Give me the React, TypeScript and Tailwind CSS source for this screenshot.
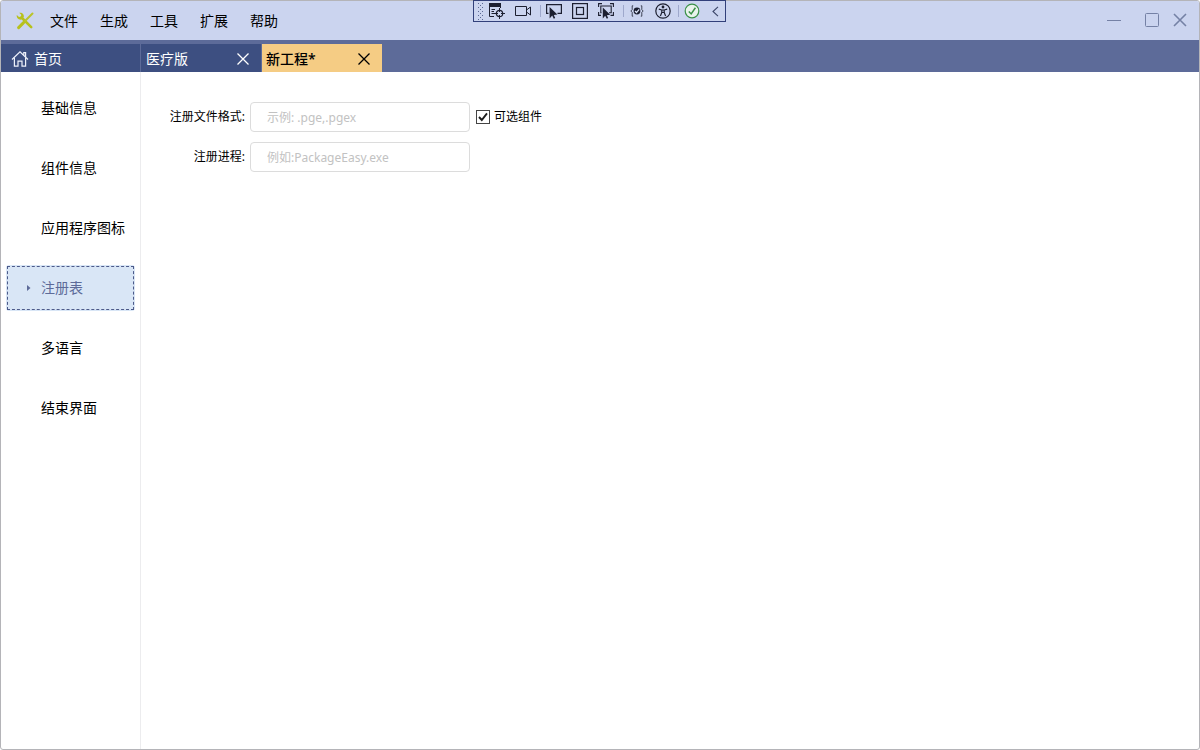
import { useState } from "react";
import type { ReactNode } from "react";

const menus = ["文件", "生成", "工具", "扩展", "帮助"];
const sections = ["基础信息", "组件信息", "应用程序图标", "注册表", "多语言", "结束界面"];

function LogoIcon() {
  return (
    <svg width="18" height="18" viewBox="0 0 18 18" fill="none">
      <path d="M5.5 5.5 L15.2 15.2" stroke="#b7c11c" strokeWidth="2.6" strokeLinecap="round" />
      <path d="M0.8 3 L3 5 L5 4.6 L5.2 2.8 L3.2 0.8 C6 0 8.4 2.4 7.8 5 L5.4 7.6 C2.6 8.2 0.2 5.8 0.8 3Z" fill="#b7c11c" />
      <path d="M16.5 1.5 L8.5 9.5" stroke="#bac42a" strokeWidth="2" strokeLinecap="round" />
      <path d="M7.6 10.6 L2.6 15.6" stroke="#b7c11c" strokeWidth="3" strokeLinecap="round" />
    </svg>
  );
}

function HomeIcon() {
  return (
    <svg width="18" height="18" viewBox="0 0 18 18" fill="none" stroke="#eef1fb" strokeWidth="1.2">
      <path d="M1 9.5 L9 1.8 L17 9.5" />
      <path d="M12.8 5.2 V2.6 H14.6 V7" />
      <path d="M3.4 7.8 V16.2 H7 V11.2 H11 V16.2 H14.6 V7.8" />
    </svg>
  );
}

function CloseIcon() {
  return (
    <svg width="12" height="12" viewBox="0 0 12 12" fill="none" stroke="currentColor" strokeWidth="1.3">
      <path d="M0.5 0.5 L11.5 11.5 M11.5 0.5 L0.5 11.5" />
    </svg>
  );
}

function ToolButton({ label, children }: { label: string; children: ReactNode }) {
  return (
    <button type="button" aria-label={label} className="flex h-5 w-[26px] shrink-0 items-center justify-center">
      {children}
    </button>
  );
}

function Separator() {
  return <span className="h-3 w-px shrink-0 bg-[#9ea8cc]" />;
}

function DebugToolbar() {
  return (
    <div className="absolute -top-px left-[472px] flex h-[22px] w-[253px] items-center border border-[#32407a] bg-[#cbd4ef] pl-1 text-[#1c1f30]">
      <svg width="6" height="17" viewBox="0 0 6 17" fill="#5c6994" className="shrink-0">
        {[0, 4, 8, 12, 16].map((y) => (
          <g key={y}>
            <rect x="0" y={y} width="1" height="1" />
            <rect x="4" y={y} width="1" height="1" />
            {y < 16 && <rect x="2" y={y + 2} width="1" height="1" />}
          </g>
        ))}
      </svg>
      <ToolButton label="实时可视化树">
        <svg width="16" height="16" viewBox="0 0 16 16" fill="none" stroke="currentColor">
          <path d="M0 0 H12 V4 H0 Z" fill="currentColor" stroke="none" />
          <path d="M0.5 3 V13.5 H5 M11.5 3 V5 M2.5 6.5 H6 M2.5 8.5 H5 M2.5 10.5 H5" />
          <circle cx="10.5" cy="10.5" r="3.2" strokeWidth="1.2" />
          <path d="M10.5 5 V9 M10.5 12 V16 M5 10.5 H9 M12 10.5 H16" />
        </svg>
      </ToolButton>
      <ToolButton label="录制">
        <svg width="17" height="12" viewBox="0 0 17 12" fill="none" stroke="currentColor">
          <path d="M0.5 1.5 H11.5 V10.5 H0.5 Z M11.5 5 L15.5 2 V10 L11.5 7" />
        </svg>
      </ToolButton>
      <span className="w-1 shrink-0" />
      <Separator />
      <ToolButton label="选择元素">
        <svg width="16" height="16" viewBox="0 0 16 16" fill="none" stroke="currentColor" strokeWidth="1.2">
          <path d="M2.5 10.4 H0.6 V1.6 H15.4 V10.4 H11.5" />
          <path d="M3.6 4 V15.4 L6.2 12.6 L7.8 15.8 L9.2 15 L7.8 12 L11.4 11.6 Z" fill="currentColor" stroke="none" />
        </svg>
      </ToolButton>
      <ToolButton label="显示布局装饰器">
        <svg width="16" height="16" viewBox="0 0 16 16" fill="none" stroke="currentColor" strokeWidth="1.2">
          <rect x="0.6" y="0.6" width="14.8" height="14.8" />
          <rect x="4.5" y="4.5" width="7" height="7" />
        </svg>
      </ToolButton>
      <ToolButton label="跟踪焦点元素">
        <svg width="16" height="16" viewBox="0 0 16 16" fill="none" stroke="currentColor" strokeWidth="1.1">
          <path d="M0.6 4 V0.6 H4 M12 0.6 H15.4 V4 M15.4 9 V12.4 H12.5 M3 12.4 H0.6 V9" />
          <path d="M3.6 9.8 H2.8 V3 H13.2 V9.8 H11" />
          <path d="M4.8 4.6 V15.4 L7.2 12.8 L8.8 15.8 L10.2 15 L8.8 12.2 L12.2 11.8 Z" fill="currentColor" stroke="none" />
        </svg>
      </ToolButton>
      <span className="w-1 shrink-0" />
      <Separator />
      <ToolButton label="绑定失败">
        <svg width="14" height="12" viewBox="0 0 14 12" fill="none" stroke="currentColor">
          <path d="M3.2 0.8 H2.2 V4.6 L0.8 6 L2.2 7.4 V11.2 H3.2 M10.8 0.8 H11.8 V4.6 L13.2 6 L11.8 7.4 V11.2 H10.8" strokeWidth="0.8" />
          <circle cx="7" cy="6" r="3.4" fill="currentColor" stroke="none" />
          <path d="M5 6 L6.5 7.5 L9.2 4.4" stroke="#dce3f7" strokeWidth="1.2" />
        </svg>
      </ToolButton>
      <ToolButton label="辅助功能">
        <svg width="16" height="16" viewBox="0 0 16 16" fill="none" stroke="currentColor" strokeWidth="1.2">
          <circle cx="8" cy="8" r="7.2" />
          <circle cx="8" cy="4" r="1.4" fill="currentColor" stroke="none" />
          <path d="M3.8 6.2 L6.8 7 H9.2 L12.2 6.2 M6.8 7 V9.5 L5.4 13 M9.2 7 V9.5 L10.6 13 M6.8 9.5 H9.2" />
        </svg>
      </ToolButton>
      <span className="w-0.5 shrink-0" />
      <Separator />
      <ToolButton label="热重载">
        <svg width="16" height="16" viewBox="0 0 16 16" fill="none" stroke="#3a9147">
          <circle cx="8" cy="8" r="6.8" fill="#e9f3ec" strokeWidth="1.2" />
          <path d="M4.8 8.4 L7.2 10.9 L11.4 4.8" strokeWidth="1.5" />
        </svg>
      </ToolButton>
      <button type="button" aria-label="折叠" className="flex h-5 flex-1 items-center justify-center">
        <svg width="7" height="11" viewBox="0 0 7 11" fill="none" stroke="#3c4669" strokeWidth="1.1">
          <path d="M6 0.8 L1 5.5 L6 10.2" />
        </svg>
      </button>
    </div>
  );
}

function TitleBar() {
  return (
    <header className="flex h-[39px] shrink-0 items-center justify-between rounded-t-[2px] bg-[#cbd4ef]">
      <div className="flex items-center pl-[15px]">
        <LogoIcon />
        <nav className="flex pl-[5px]">
          {menus.map((m) => (
            <button key={m} type="button" className="w-[50px] text-center text-sm text-black">
              {m}
            </button>
          ))}
        </nav>
      </div>
      <div className="flex items-center pr-3 pb-px text-[#7581a5]">
        <button type="button" aria-label="最小化" className="flex h-4 w-[38px] items-center">
          <svg width="14" height="14" viewBox="0 0 14 14" stroke="currentColor">
            <path d="M0 7.5 H14" />
          </svg>
        </button>
        <button type="button" aria-label="最大化" className="flex h-4 w-7 items-center">
          <svg width="14" height="14" viewBox="0 0 14 14" fill="none" stroke="currentColor">
            <rect x="0.5" y="0.5" width="13" height="13" rx="1" />
          </svg>
        </button>
        <button type="button" aria-label="关闭" className="flex h-4 items-center">
          <svg width="14" height="14" viewBox="0 0 14 14" stroke="currentColor" strokeWidth="1.6">
            <path d="M1 1 L13 13 M13 1 L1 13" />
          </svg>
        </button>
      </div>
    </header>
  );
}

function TabStrip() {
  return (
    <div className="flex h-8 shrink-0 items-end bg-[#5d6b99]">
      <button type="button" className="flex h-7 w-[139px] items-center gap-[5px] bg-[#3d4f81] pt-0.5 pl-[10px] text-sm text-white">
        <HomeIcon />
        首页
      </button>
      <div className="flex h-7 w-[121px] items-center justify-between border-l border-[#5d6b99] bg-[#3d4f81] pt-0.5 pr-3 pl-[5px] text-white">
        <button type="button" className="text-sm">医疗版</button>
        <button type="button" aria-label="关闭 医疗版"><CloseIcon /></button>
      </div>
      <div className="flex h-7 w-[121px] items-center justify-between border-l border-[#5d6b99] bg-[#f5cc84] pt-0.5 pr-3 pl-1 text-black">
        <button type="button" className="text-sm font-medium">新工程*</button>
        <button type="button" aria-label="关闭 新工程"><CloseIcon /></button>
      </div>
    </div>
  );
}

function Sidebar({ current, onSelect }: { current: string; onSelect: (s: string) => void }) {
  return (
    <nav className="flex w-[140px] shrink-0 flex-col gap-[14px] border-r border-[#ececee] px-[5px] pt-[13px]">
      {sections.map((s) =>
        s === current ? (
          <button key={s} type="button" aria-current="page" className="h-[46px] rounded-[3px] bg-[#d9e6f6] p-px text-sm text-[#5d6b99]">
            <span className="flex h-full items-center border border-dashed border-[#4c5a8a] pl-[18px]">
              <svg width="5" height="6" viewBox="0 0 5 6" fill="#5d6b99" className="mr-[10px]">
                <path d="M1 0 L4.5 3 L1 6 Z" />
              </svg>
              {s}
            </span>
          </button>
        ) : (
          <button key={s} type="button" onClick={() => onSelect(s)} className="h-[46px] pl-[35px] text-left text-sm whitespace-nowrap text-black">
            {s}
          </button>
        ),
      )}
    </nav>
  );
}

const field =
  "h-[30px] w-[220px] rounded border border-[#dcdcdc] bg-white px-4 text-xs text-black outline-none placeholder:text-[#c2c2c2] placeholder:opacity-100";

function RegistryForm() {
  const [optional, setOptional] = useState(true);
  return (
    <main className="flex flex-1 flex-col gap-[10px] pt-[30px] text-xs text-black">
      <div className="flex items-center">
        <label htmlFor="ext" className="w-[104px] text-right">注册文件格式:</label>
        <input id="ext" type="text" placeholder="示例: .pge,.pgex" className={`ml-[5px] ${field}`} />
        <label className="ml-[6px] flex items-center gap-1">
          <span className="grid h-[14px] w-[14px]">
            <input
              type="checkbox"
              checked={optional}
              onChange={(e) => setOptional(e.target.checked)}
              className="col-start-1 row-start-1 h-[14px] w-[14px] appearance-none border border-[#444444] bg-white"
            />
            {optional && (
              <svg width="14" height="14" viewBox="0 0 14 14" fill="none" stroke="#1c1c1c" strokeWidth="1.9" className="pointer-events-none col-start-1 row-start-1">
                <path d="M3 7 L5.8 10 L11 3.4" />
              </svg>
            )}
          </span>
          可选组件
        </label>
      </div>
      <div className="flex items-center">
        <label htmlFor="proc" className="w-[104px] text-right">注册进程:</label>
        <input id="proc" type="text" placeholder="例如:PackageEasy.exe" className={`ml-[5px] ${field}`} />
      </div>
    </main>
  );
}

export default function App() {
  const [current, setCurrent] = useState("注册表");
  return (
    <div className="relative flex min-h-screen flex-col rounded-[3px] border border-[#b4b4b8] bg-white font-['Noto_Sans','Noto_Sans_CJK_SC',sans-serif]">
      <TitleBar />
      <TabStrip />
      <div className="flex flex-1">
        <Sidebar current={current} onSelect={setCurrent} />
        <RegistryForm />
      </div>
      <DebugToolbar />
    </div>
  );
}
